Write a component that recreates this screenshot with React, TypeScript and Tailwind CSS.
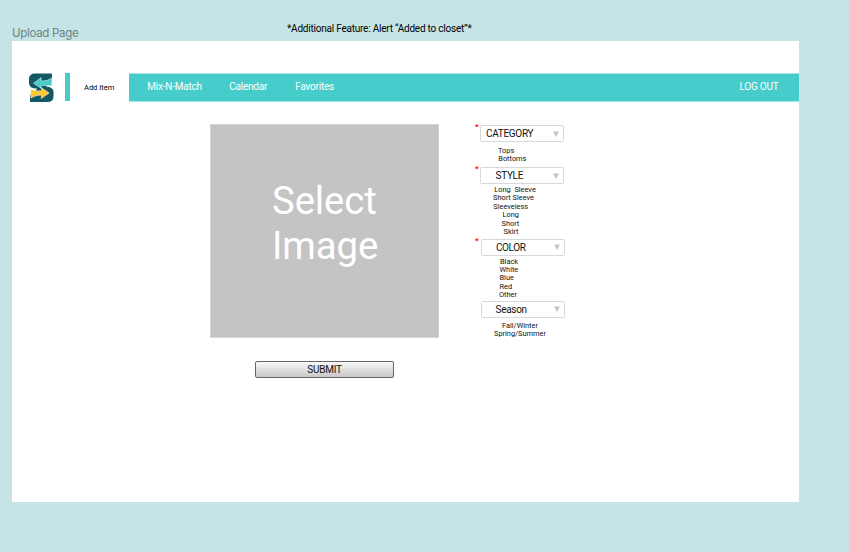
type Option = { label: string; className: string };

type Field = {
  label: string;
  required: boolean;
  wrapClass: string;
  boxClass: string;
  labelClass: string;
  listClass: string;
  options: Option[];
};

const fields: Field[] = [
  {
    label: 'CATEGORY',
    required: true,
    wrapClass: 'h-[42px] pl-[5px]',
    boxClass: 'h-[17px]',
    labelClass: 'pl-[5px] tracking-[-0.3px]',
    listClass: 'pt-[5px]',
    options: [
      { label: 'Tops', className: 'pl-[18px]' },
      { label: 'Bottoms', className: 'pl-[18.3px]' },
    ],
  },
  {
    label: 'STYLE',
    required: true,
    wrapClass: 'h-[71.5px] pl-[5px]',
    boxClass: 'h-[17px]',
    labelClass: 'pl-[14.5px] tracking-[-0.3px]',
    listClass: 'pt-[2px]',
    options: [
      { label: 'Long  Sleeve', className: 'pl-[14.3px]' },
      { label: 'Short Sleeve', className: 'pl-[13px]' },
      { label: 'Sleeveless', className: 'pl-[13.3px]' },
      { label: 'Long', className: 'pl-[22.5px]' },
      { label: 'Short', className: 'pl-[21.5px]' },
      { label: 'Skirt', className: 'pl-[23.5px]' },
    ],
  },
  {
    label: 'COLOR',
    required: true,
    wrapClass: 'h-[62px] pl-[6px]',
    boxClass: 'h-[17px]',
    labelClass: 'pl-[14px] tracking-[-0.4px]',
    listClass: 'pt-[2px]',
    options: [
      { label: 'Black', className: 'pl-[19px]' },
      { label: 'White', className: 'pl-[18.5px]' },
      { label: 'Blue', className: 'pl-[18.5px]' },
      { label: 'Red', className: 'pl-[18.5px]' },
      { label: 'Other', className: 'pl-[18px]' },
    ],
  },
  {
    label: 'Season',
    required: false,
    wrapClass: 'h-[40px] pl-[6px]',
    boxClass: 'h-[17px]',
    labelClass: 'pl-[13.5px] tracking-[-0.3px]',
    listClass: 'pt-[4px]',
    options: [
      { label: 'Fall/Winter', className: 'pl-[21px]' },
      { label: 'Spring/Summer', className: 'pl-[13px]' },
    ],
  },
];

function Logo() {
  return (
    <svg className="h-[30px] w-[25px]" viewBox="0 0 25 30" aria-hidden="true">
      <path
        d="M6 .5H23V6.500Q22.500 10.500 19 11.500L17 13.500Q24.500 14 24.500 19V23Q24.500 29 18.500 29H1V23Q1.500 19.500 6 18.500L8 15.500Q0 15.500 0 10V6Q0 .5 6 .5Z"
        fill="#145765"
      />
      <path
        d="M4.500 10.200L12.300 4.600L12 8Q18 8.600 22.800 5V12.800Q18 12.300 12 12.400L12.300 15.400Z"
        fill="#47cccc"
        stroke="#e7f4f4"
        strokeWidth=".5"
      />
      <path
        d="M20.200 20L12.200 14.500L12.600 17.900Q7 18 1.800 16.400V25Q7 22 12.600 22.100L12.200 25.600Z"
        fill="#fdc634"
        stroke="#f7f2df"
        strokeWidth=".5"
      />
    </svg>
  );
}

function SelectField({ field }: { field: Field }) {
  return (
    <div className={`relative ${field.wrapClass}`}>
      {field.required && (
        <span className="absolute -top-[3px] left-0 text-[8px] leading-[10px] font-bold text-[#ff0000]">*</span>
      )}
      <button
        className={`flex w-[84px] items-center justify-between rounded-[1.5px] border border-[#d8d8d8] bg-white pr-[4px] ${field.boxClass}`}
      >
        <span className={`text-[10px] leading-[15px] text-[#111] ${field.labelClass}`}>{field.label}</span>
        <svg className="h-[6px] w-[6px]" viewBox="0 0 6 6" aria-hidden="true">
          <path d="M0 .5H6L3 6Z" fill="#c4c4c4" />
        </svg>
      </button>
      <ul className={`text-[7.4px] leading-[8.4px] whitespace-pre text-[#111] ${field.listClass}`}>
        {field.options.map((option) => (
          <li key={option.label} className={option.className}>
            {option.label}
          </li>
        ))}
      </ul>
    </div>
  );
}

export default function App() {
  return (
    <div className="h-[552px] w-[849px] overflow-hidden bg-[#c6e4e5] pl-[12px] font-['Roboto',sans-serif]">
      <header className="flex h-[41px] items-start">
        <div className="w-[275px] pt-[26px] font-['Inter',sans-serif] text-[11.5px] leading-[15px] tracking-[-0.3px] text-[#6b8485]">
          Upload Page
        </div>
        <div className="pt-[21px] text-[10px] leading-[15px] tracking-[-0.22px] whitespace-nowrap text-black">
          *Additional Feature: Alert “Added to closet”*
        </div>
      </header>
      <main className="h-[461px] w-[787px] bg-white pt-[32px]">
        <nav className="flex h-[29px] items-stretch">
          <div className="w-[53px] pl-[17px]">
            <Logo />
          </div>
          <div className="h-[28px] w-[5px] bg-[#47cccc]" />
          <div className="w-[59px] pt-[8px] pl-[14px] text-[7.5px] leading-[13px] text-black">Add Item</div>
          <div className="flex flex-1 border-y border-[#a0e4e4] bg-[#47cccc] pt-[5px] pr-[20.5px] pl-[18.3px] text-[10px] leading-[15px] tracking-[-0.23px] text-white">
            <span className="w-[82px]">Mix-N-Match</span>
            <span className="w-[66px]">Calendar</span>
            <span>Favorites</span>
            <span className="ml-auto">LOG OUT</span>
          </div>
        </nav>
        <div className="flex pt-[22px] pl-[198px]">
          <section className="w-[265px]">
            <div className="flex h-[214px] w-[229px] items-center border border-[#d5d5d5] bg-[#c4c4c4] pb-[16px] pl-[61px] text-[38.3px] leading-[45px] tracking-[-0.1px] text-white">
              <div>
                Select
                <br />
                Image
              </div>
            </div>
            <button className="mt-[23px] ml-[45px] block h-[17px] w-[139px] rounded-[2px] border border-[#656565] bg-linear-to-b from-[#f8f8f8] to-[#c8c8c8] text-center text-[10px] leading-[16px] tracking-[-0.25px] text-[#111]">
              SUBMIT
            </button>
          </section>
          <form className="w-[100px] pt-px">
            {fields.map((field) => (
              <SelectField key={field.label} field={field} />
            ))}
          </form>
        </div>
      </main>
    </div>
  );
}
